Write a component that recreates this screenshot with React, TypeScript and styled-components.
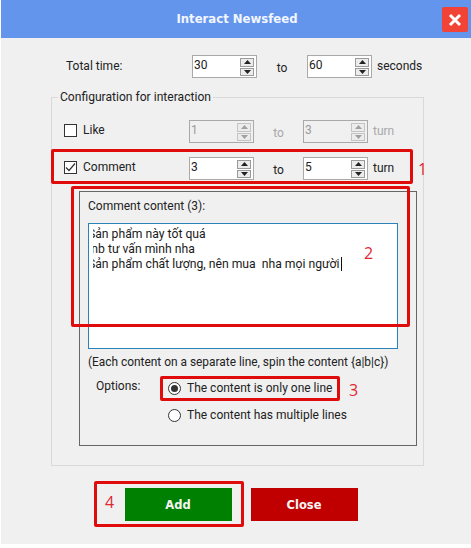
import styled, { createGlobalStyle } from "styled-components";

const GlobalStyle = createGlobalStyle`
  html, body {
    margin: 0;
    background: #ffffff;
  }
  * {
    box-sizing: border-box;
  }
`;

const Page = styled.div`
  width: 471px;
  height: 548px;
  padding-left: 1px;
  overflow: hidden;
`;

const Window = styled.div`
  position: relative;
  width: 470px;
  height: 544px;
  background: #f0f0f0;
  font-family: Roboto, "Noto Sans", sans-serif;
  font-size: 12px;
  color: #222222;
`;

const TitleBar = styled.div`
  position: relative;
  height: 38px;
  display: flex;
  align-items: center;
  justify-content: center;
  padding-left: 2px;
  background: #6495ed;
  color: #f2f6fe;
  font-family: "DejaVu Sans", sans-serif;
  font-size: 11.7px;
  font-weight: 700;
`;

const CloseBox = styled.div`
  position: absolute;
  left: 441px;
  top: 7px;
  width: 26px;
  height: 25px;
  border-radius: 2px;
  background: #f14336;
  display: flex;
  align-items: center;
  justify-content: center;
`;

const TimeRow = styled.div`
  display: flex;
  align-items: center;
  height: 23px;
  margin-top: 17px;
  padding-left: 65px;
`;

const TimeLabel = styled.div`
  width: 126px;
  padding-bottom: 2px;
`;

const To = styled.div<{ $disabled?: boolean; $width: number }>`
  width: ${(p) => p.$width}px;
  text-align: center;
  padding-top: 3px;
  color: ${(p) => (p.$disabled ? "#a8a8a8" : "#222222")};
`;

const Unit = styled.div<{ $disabled?: boolean }>`
  margin-left: 5px;
  padding-bottom: 2px;
  color: ${(p) => (p.$disabled ? "#a8a8a8" : "#222222")};
`;

const SpinBox = styled.div<{ $disabled?: boolean }>`
  display: flex;
  justify-content: space-between;
  width: 65px;
  height: 23px;
  padding: 1px 2px 1px 1px;
  border: 1px solid #a9a9a9;
  background: ${(p) => (p.$disabled ? "#f0f0f0" : "#ffffff")};
  color: ${(p) => (p.$disabled ? "#9a9a9a" : "#222222")};
  line-height: 17px;
`;

const SpinButtons = styled.div`
  display: flex;
  flex-direction: column;
  gap: 1px;
  width: 14px;
  margin-top: 1px;
`;

const SpinButton = styled.div<{ $disabled?: boolean }>`
  height: 9px;
  border: 1px solid ${(p) => (p.$disabled ? "#c4c4c4" : "#9a9a9a")};
  background: #ececec;
  display: flex;
  align-items: center;
  justify-content: center;
`;

const Group = styled.fieldset`
  width: 373px;
  height: 377px;
  margin: 11px 0 0 50px;
  padding: 0;
  border: 1px solid #d9d9d9;
  min-inline-size: 0;
`;

const GroupTitle = styled.legend`
  margin-left: 6px;
  padding: 0 2px;
  line-height: 16px;
  font-size: 12.1px;
`;

const Row = styled.div<{ $top: number }>`
  display: flex;
  align-items: center;
  height: 23px;
  margin-top: ${(p) => p.$top}px;
  padding-left: 12px;
`;

const CheckLabel = styled.label`
  display: flex;
  align-items: center;
  gap: 6px;
  width: 125px;
  padding-bottom: 3px;
`;

const CheckBox = styled.span`
  display: flex;
  align-items: center;
  justify-content: center;
  width: 13px;
  height: 13px;
  border: 1px solid #333333;
  background: #ffffff;
`;

const ContentBox = styled.div`
  width: 338px;
  height: 255px;
  margin: 11px 0 0 27px;
  padding: 6px 18px 0 8px;
  border: 1px solid #666666;
`;

const ContentTitle = styled.div`
  line-height: 16px;
`;

const TextBox = styled.div`
  width: 310px;
  height: 126px;
  margin-top: 9px;
  padding: 3px 0 0 4px;
  border: 1px solid #2a82b8;
  background: #ffffff;
  font-size: 12.2px;
  line-height: 15px;
  color: #1a1a1a;
`;

const TextClip = styled.div`
  overflow: hidden;
  white-space: pre;
`;

const TextLine = styled.div`
  margin-left: -5px;
`;

const Caret = styled.span`
  display: inline-block;
  width: 1px;
  height: 14px;
  margin-left: 1px;
  vertical-align: -3px;
  background: #111111;
`;

const Note = styled.div`
  margin-top: 5px;
  line-height: 16px;
  font-size: 11.9px;
  white-space: nowrap;
`;

const OptionsRow = styled.div`
  display: flex;
  margin-top: 8px;
  padding-left: 8px;
`;

const OptionsLabel = styled.div`
  width: 72px;
  line-height: 16px;
`;

const RadioList = styled.div`
  display: flex;
  flex-direction: column;
  gap: 11px;
  padding-top: 2px;
`;

const RadioLabel = styled.div`
  display: flex;
  align-items: center;
  gap: 6px;
  height: 16px;
`;

const Radio = styled.span<{ $checked?: boolean }>`
  display: flex;
  align-items: center;
  justify-content: center;
  width: 13px;
  height: 13px;
  border: 1px solid #333333;
  border-radius: 50%;
  background: #ffffff;

  &::after {
    content: "";
    display: ${(p) => (p.$checked ? "block" : "none")};
    width: 7px;
    height: 7px;
    border-radius: 50%;
    background: #333333;
  }
`;

const Actions = styled.div`
  display: flex;
  gap: 19px;
  margin-top: 22px;
  padding-left: 124px;
`;

const ActionButton = styled.button<{ $color: string }>`
  width: 107px;
  height: 33px;
  padding: 0 1px 0 0;
  border: none;
  background: ${(p) => p.$color};
  color: #f5f5f5;
  font-family: "DejaVu Sans", sans-serif;
  font-size: 11.5px;
  font-weight: 700;
`;

const Callout = styled.div<{ $x: number; $y: number; $w: number; $h: number }>`
  position: absolute;
  left: ${(p) => p.$x}px;
  top: ${(p) => p.$y}px;
  width: ${(p) => p.$w}px;
  height: ${(p) => p.$h}px;
  border: 3px solid #e00b0b;
  border-radius: 2px;
  pointer-events: none;
`;

const CalloutNumber = styled.div<{ $x: number; $y: number }>`
  position: absolute;
  left: ${(p) => p.$x}px;
  top: ${(p) => p.$y}px;
  color: #e22730;
  font-family: "Open Sans", sans-serif;
  font-size: 16px;
  line-height: 20px;
`;

function Arrow({ up, color }: { up?: boolean; color: string }) {
  return (
    <svg width="7" height="4" viewBox="0 0 7 4">
      <path d={up ? "M3.5 0 7 4H0z" : "M0 0h7L3.5 4z"} fill={color} />
    </svg>
  );
}

function Spinner({ value, disabled }: { value: number; disabled?: boolean }) {
  const color = disabled ? "#a0a0a0" : "#222222";

  return (
    <SpinBox $disabled={disabled}>
      <span>{value}</span>
      <SpinButtons>
        <SpinButton $disabled={disabled}>
          <Arrow up color={color} />
        </SpinButton>
        <SpinButton $disabled={disabled}>
          <Arrow color={color} />
        </SpinButton>
      </SpinButtons>
    </SpinBox>
  );
}

function App() {
  return (
    <Page>
      <GlobalStyle />
      <Window>
        <TitleBar>
          Interact Newsfeed
          <CloseBox>
            <svg width="16" height="16" viewBox="0 0 16 16">
              <path d="M3 3l10 10M13 3L3 13" stroke="#fff" strokeWidth="3" />
            </svg>
          </CloseBox>
        </TitleBar>

        <TimeRow>
          <TimeLabel>Total time:</TimeLabel>
          <Spinner value={30} />
          <To $width={50}>to</To>
          <Spinner value={60} />
          <Unit>seconds</Unit>
        </TimeRow>

        <Group>
          <GroupTitle>Configuration for interaction</GroupTitle>

          <Row $top={15}>
            <CheckLabel>
              <CheckBox />
              Like
            </CheckLabel>
            <Spinner value={1} disabled />
            <To $width={49} $disabled>
              to
            </To>
            <Spinner value={3} disabled />
            <Unit $disabled>turn</Unit>
          </Row>

          <Row $top={14}>
            <CheckLabel>
              <CheckBox>
                <svg width="11" height="11" viewBox="0 0 11 11">
                  <path d="M1 5.5l3 3 6-7" fill="none" stroke="#333" strokeWidth="1.2" />
                </svg>
              </CheckBox>
              Comment
            </CheckLabel>
            <Spinner value={3} />
            <To $width={49}>to</To>
            <Spinner value={5} />
            <Unit>turn</Unit>
          </Row>

          <ContentBox>
            <ContentTitle>Comment content (3):</ContentTitle>
            <TextBox>
              <TextClip>
                <TextLine>Sản phẩm này tốt quá</TextLine>
                <TextLine>Inb tư vấn mình nha</TextLine>
                <TextLine>
                  Sản phẩm chất lượng, nên mua  nha mọi người
                  <Caret />
                </TextLine>
              </TextClip>
            </TextBox>
            <Note>(Each content on a separate line, spin the content {"{a|b|c}"})</Note>
            <OptionsRow>
              <OptionsLabel>Options:</OptionsLabel>
              <RadioList>
                <RadioLabel>
                  <Radio $checked />
                  The content is only one line
                </RadioLabel>
                <RadioLabel>
                  <Radio />
                  The content has multiple lines
                </RadioLabel>
              </RadioList>
            </OptionsRow>
          </ContentBox>
        </Group>

        <Actions>
          <ActionButton $color="#008000">Add</ActionButton>
          <ActionButton $color="#c00000">Close</ActionButton>
        </Actions>

        <Callout $x={50} $y={149} $w={362} $h={35} />
        <Callout $x={70} $y={186} $w={339} $h={141} />
        <Callout $x={159} $y={376} $w={180} $h={25} />
        <Callout $x={93} $y={481} $w={150} $h={46} />
        <CalloutNumber $x={417} $y={159}>1</CalloutNumber>
        <CalloutNumber $x={363} $y={243}>2</CalloutNumber>
        <CalloutNumber $x={348} $y={380}>3</CalloutNumber>
        <CalloutNumber $x={104} $y={492}>4</CalloutNumber>
      </Window>
    </Page>
  );
}

export default App;
